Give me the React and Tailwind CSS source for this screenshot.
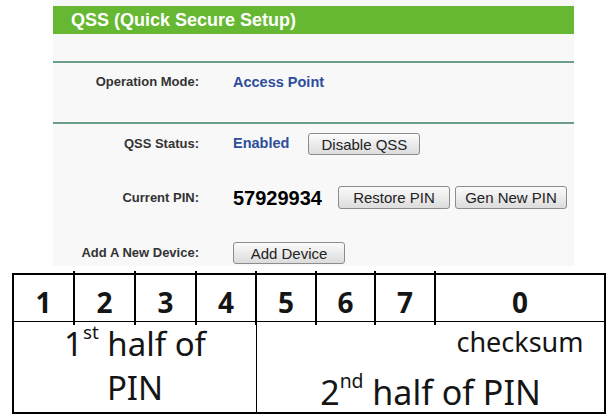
const Btn = ({ children, className = "" }) => (
  <button
    className={`h-full w-[112px] rounded-[3px] border border-[#8c8c8c] bg-linear-to-b from-[#fbfbfb] to-[#dcdcdc] text-[15px] leading-none text-[#222] ${className}`}
  >
    {children}
  </button>
);

const Label = ({ children }) => (
  <div className="w-[146px] shrink-0 text-right text-[13px] font-bold leading-[14px] text-[#333]">
    {children}
  </div>
);

// little overhang of the digit dividers above and below the first row
const Ticks = () => (
  <>
    <span className="absolute -top-[4px] -right-[2px] h-[4px] w-[2px] bg-black" />
    <span className="absolute -bottom-[4px] -right-[2px] h-[4px] w-[2px] bg-black" />
  </>
);

const digits = [
  { d: "1", w: "w-[61px]" },
  { d: "2", w: "w-[61px]" },
  { d: "3", w: "w-[61px]" },
  { d: "4", w: "w-[60px]" },
  { d: "5", w: "w-[60px]" },
  { d: "6", w: "w-[59px]" },
  { d: "7", w: "w-[60px]" },
];

export default function App() {
  return (
    <div className="h-[416px] w-[615px] overflow-hidden bg-white font-['Liberation_Sans',Arial,sans-serif]">
      <div className="ml-[53px] w-[521px] bg-[#f8f8f8] pt-[6px] pb-[2px]">
        <div className="flex h-[28px] items-center bg-[#66b832] pl-[18px] text-[18px] font-bold text-white">
          QSS (Quick Secure Setup)
        </div>

        <div className="mt-[27px] h-[2px] bg-[#6b9e86]" />

        <div className="flex h-[59px] items-start pt-[12px]">
          <Label>Operation Mode:</Label>
          <div className="ml-[34px] text-[14.5px] font-bold leading-[14px] text-[#2d4e9b]">
            Access Point
          </div>
        </div>

        <div className="h-[2px] bg-[#6b9e86]" />

        <div className="mt-[9px] flex h-[22px] items-center">
          <Label>QSS Status:</Label>
          <div className="ml-[34px] text-[14.5px] font-bold text-[#2d4e9b]">Enabled</div>
          <Btn className="ml-[19px]">Disable QSS</Btn>
        </div>

        <div className="mt-[31px] flex h-[23px] items-center">
          <Label>Current PIN:</Label>
          <div className="ml-[34px] text-[20px] font-bold text-black">57929934</div>
          <Btn className="ml-[16px]">Restore PIN</Btn>
          <Btn className="ml-[5px]">Gen New PIN</Btn>
        </div>

        <div className="mt-[33px] flex h-[22px] items-center">
          <Label>Add A New Device:</Label>
          <Btn className="ml-[34px] w-[111px]">Add Device</Btn>
        </div>
      </div>

      <div className="ml-[12px] mt-[7px] w-[594px] border-2 border-black font-['Noto_Sans',sans-serif] text-[#151515]">
        <div className="flex h-[47px] border-b border-black">
          {digits.map((c) => (
            <div
              key={c.d}
              className={`relative flex shrink-0 items-center justify-center border-r-2 border-black pt-[7px] text-[28px] font-bold ${c.w}`}
            >
              {c.d}
              <Ticks />
            </div>
          ))}
          <div className="flex flex-1 items-center justify-center pt-[7px] text-[28px] font-bold">
            0
          </div>
        </div>

        <div className="flex h-[90px]">
          <div className="flex w-[243px] shrink-0 flex-col items-center border-r border-black text-[33px] leading-[44px]">
            <div>
              1<sup className="-top-[17px] text-[0.57em]">st</sup> half of
            </div>
            <div>PIN</div>
          </div>
          <div className="flex flex-1 flex-col">
            <div className="mt-[5px] flex justify-end">
              <span className="w-[168px] text-center text-[27px] leading-[30px]">checksum</span>
            </div>
            <div className="mt-[15px] text-center text-[34px] leading-[40px]">
              2<sup className="-top-[17px] text-[0.57em]">nd</sup> half of PIN
            </div>
          </div>
        </div>
      </div>
    </div>
  );
}
